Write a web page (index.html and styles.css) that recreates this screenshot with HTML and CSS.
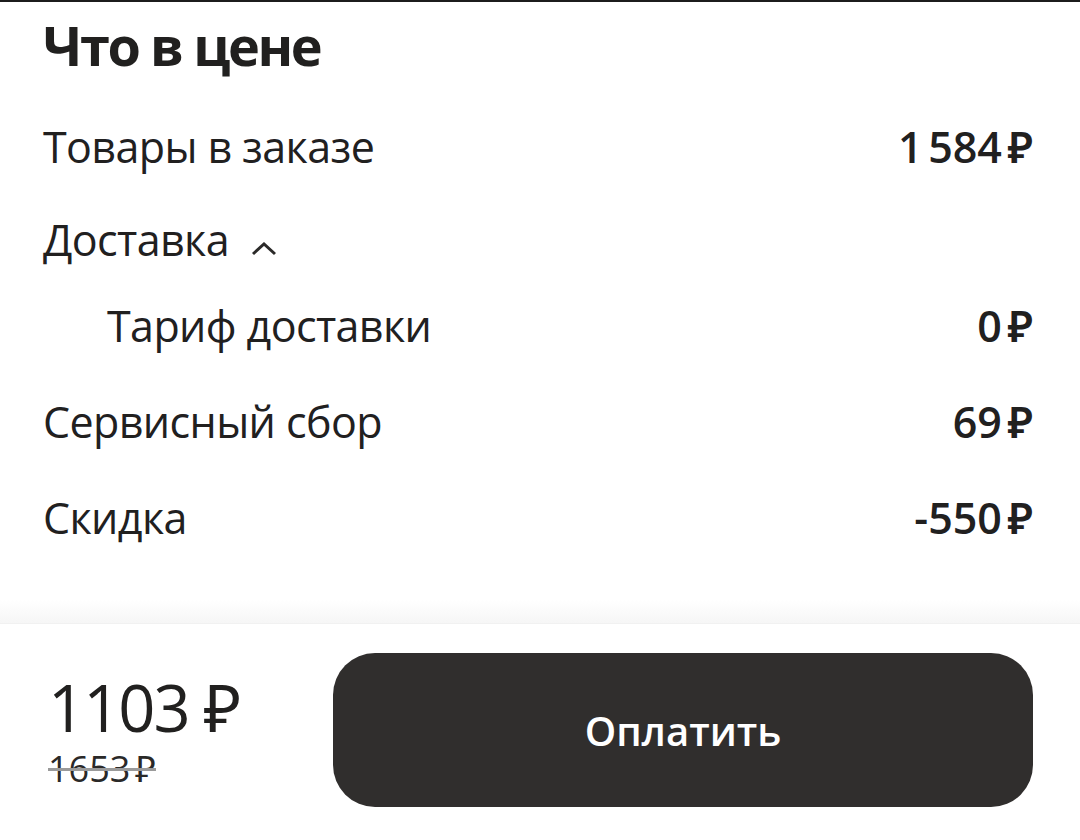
FILE: index.html
```html
<!DOCTYPE html>
<html lang="ru">
<head>
    <meta charset="UTF-8">
    <meta name="viewport" content="width=device-width, initial-scale=1.0">
    <title>Что в цене</title>
    <link rel="stylesheet" href="styles.css">
</head>
<body>
    <div class="sheet">
        <h1 class="title">Что в цене</h1>
        <div class="details">
            <div class="row row-first">
                <span class="label">Товары в заказе</span>
                <span class="value">1&#8239;584&#8239;₽</span>
            </div>
            <div class="row row-toggle">
                <span class="label">Доставка
                    <svg class="chevron" width="26" height="14" viewBox="0 0 26 14">
                        <polyline points="2,12 13,2 24,12" fill="none" stroke="#2b2a29" stroke-width="3"/>
                    </svg>
                </span>
            </div>
            <div class="row row-sub">
                <span class="label">Тариф доставки</span>
                <span class="value">0&#8239;₽</span>
            </div>
            <div class="row">
                <span class="label">Сервисный сбор</span>
                <span class="value">69&#8239;₽</span>
            </div>
            <div class="row">
                <span class="label">Скидка</span>
                <span class="value">-550&#8239;₽</span>
            </div>
        </div>
    </div>

    <div class="footer">
        <div class="total">
            <div class="total-price">1103 ₽</div>
            <div class="total-old">1653&#8239;₽</div>
        </div>
        <button class="btn-pay">Оплатить</button>
    </div>
</body>
</html>
```

FILE: styles.css
```css
* {
    margin: 0;
    padding: 0;
    box-sizing: border-box;
}

body {
    font-family: 'Open Sans', 'Noto Sans', sans-serif;
    color: #21201f;
    background: #fff;
    border-top: 2px solid #1c1c1c;
    width: 1080px;
    height: 840px;
    overflow: hidden;
}

.sheet {
    padding: 0 47px 0 43px;
    height: 621px;
}

.title {
    font-size: 54px;
    font-weight: 700;
    line-height: 1;
    padding-top: 16px;
    letter-spacing: -2.4px;
}

.details {
    margin-top: 20px;
}

.row {
    display: flex;
    justify-content: space-between;
    align-items: center;
    height: 96px;
    font-size: 43px;
    line-height: 60px;
}

.row-first {
    height: 110px;
}

.row-toggle {
    height: 76px;
}

.row-sub {
    padding-left: 64px;
}

.label {
    display: flex;
    align-items: center;
    letter-spacing: -0.6px;
}

.chevron {
    margin-left: 22px;
    margin-top: 17px;
}

.value {
    font-weight: 600;
    letter-spacing: -1px;
}

.footer {
    position: relative;
    display: flex;
    align-items: flex-start;
    justify-content: space-between;
    padding: 29px 47px 0 48px;
    background: #fff;
    height: 240px;
    border-top: 1px solid #f1f1f1;
}

.footer::before {
    content: '';
    position: absolute;
    left: 0;
    right: 0;
    top: -24px;
    height: 23px;
    background: linear-gradient(to bottom, #ffffff, #f6f6f6);
}

.total {
    padding-top: 12px;
}

.total-price {
    font-size: 65px;
    font-weight: 400;
    line-height: 84px;
    letter-spacing: -2px;
}

.total-old {
    font-size: 36px;
    line-height: 40px;
    color: #2a2928;
    text-decoration: line-through;
    text-decoration-color: #9a9a9a;
    text-decoration-thickness: 3px;
    letter-spacing: -1px;
}

.btn-pay {
    width: 700px;
    height: 154px;
    border: none;
    border-radius: 42px;
    background: #302e2d;
    color: #fff;
    font-family: inherit;
    font-size: 40px;
    font-weight: 600;
    cursor: pointer;
}
```
